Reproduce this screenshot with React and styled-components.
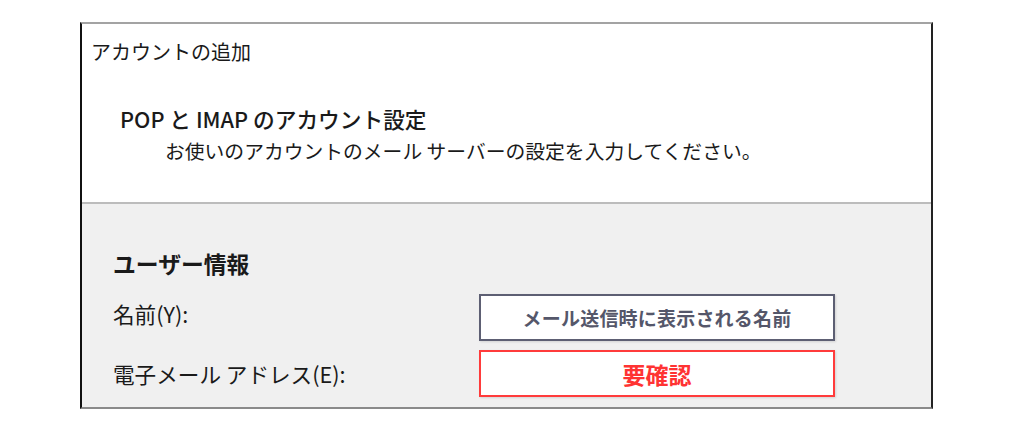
import React from 'react';
import styled, { createGlobalStyle } from 'styled-components';

const GlobalStyle = createGlobalStyle`
  html, body {
    margin: 0;
    padding: 0;
    background: #ffffff;
  }
  body {
    font-family: "Noto Sans CJK JP", "Noto Sans", sans-serif;
    color: #1a1a1a;
  }
`;

const Page = styled.div`
  width: 1024px;
  height: 432px;
  padding: 22px 0 0 80px;
  box-sizing: border-box;
`;

const Dialog = styled.div`
  width: 853px;
  height: 387px;
  box-sizing: border-box;
  border-top: 2px solid #a3a3a3;
  border-left: 2px solid #111;
  border-right: 2px solid #222;
  border-bottom: 2px solid #8a8a8a;
  display: flex;
  flex-direction: column;
`;

const Header = styled.div`
  background: #ffffff;
  height: 180px;
  box-sizing: border-box;
  padding: 14px 0 0 9px;
  border-bottom: 2px solid #bcbcbc;
`;

const Title = styled.div`
  font-size: 20px;
  line-height: 28px;
`;

const Heading = styled.div`
  margin: 37px 0 0 29px;
  font-size: 21.7px;
  font-weight: 500;
  line-height: 32px;
`;

const Subtitle = styled.div`
  margin-left: 74px;
  font-size: 19.8px;
  line-height: 32px;
`;

const Body = styled.div`
  flex: 1;
  background: #f0f0f0;
  padding: 45px 0 0 31px;
`;

const SectionTitle = styled.div`
  font-size: 22.8px;
  font-weight: 700;
  line-height: 30px;
`;

const Form = styled.div`
  margin-top: 15px;
  display: grid;
  grid-template-columns: 366px 356px;
  grid-auto-rows: 47px;
  row-gap: 9px;
`;

const Label = styled.div`
  align-self: center;
  font-size: 21.6px;
  line-height: 30px;
  transform: translateY(${(p) => p.$shift || 0}px);
`;

const Box = styled.div`
  box-sizing: border-box;
  background: #ffffff;
  border: 2px solid ${(p) => (p.$alert ? '#ff3b3b' : '#5d5f73')};
  box-shadow: 1px 1px 2px rgba(0, 0, 0, 0.12);
  display: flex;
  align-items: center;
  justify-content: center;
  color: ${(p) => (p.$alert ? '#ff3333' : '#55576a')};
  font-weight: 700;
  font-size: ${(p) => (p.$alert ? '23px' : '19px')};
  letter-spacing: ${(p) => (p.$alert ? '0' : '0.2px')};
`;

export default function App() {
  return (
    <>
      <GlobalStyle />
      <Page>
        <Dialog>
          <Header>
            <Title>アカウントの追加</Title>
            <Heading>POP と IMAP のアカウント設定</Heading>
            <Subtitle>お使いのアカウントのメール サーバーの設定を入力してください。</Subtitle>
          </Header>
          <Body>
            <SectionTitle>ユーザー情報</SectionTitle>
            <Form>
              <Label $shift={-4}>名前(Y):</Label>
              <Box>メール送信時に表示される名前</Box>
              <Label>電子メール アドレス(E):</Label>
              <Box $alert>要確認</Box>
            </Form>
          </Body>
        </Dialog>
      </Page>
    </>
  );
}
